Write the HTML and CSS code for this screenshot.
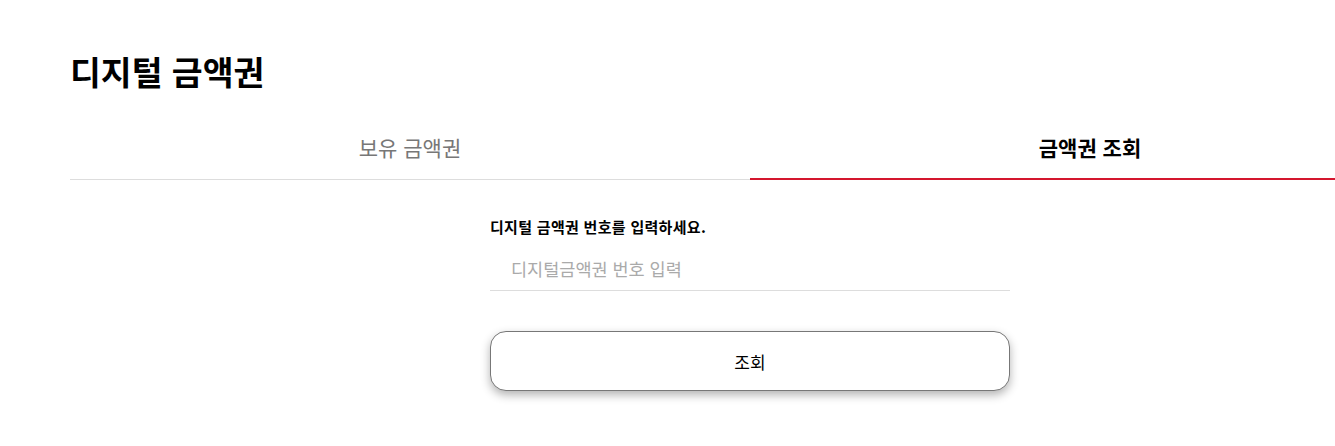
FILE: index.html
```html
<!DOCTYPE html>
<html lang="ko">
<head>
    <meta charset="UTF-8">
    <meta name="viewport" content="width=device-width, initial-scale=1.0">
    <title>디지털 금액권</title>
    <link rel="stylesheet" href="styles.css">
</head>
<body>
    <div class="page">
        <h1 class="title">디지털 금액권</h1>
        <div class="tabs">
            <div class="tab">보유 금액권</div>
            <div class="tab active">금액권 조회</div>
        </div>
        <form class="search">
            <label class="label" for="voucherNo">디지털 금액권 번호를 입력하세요.</label>
            <input type="text" id="voucherNo" placeholder="디지털금액권 번호 입력">
            <button type="button">조회</button>
        </form>
    </div>
</body>
</html>
```

FILE: styles.css
```css
body {
    font-family: "Noto Sans CJK KR", "Noto Sans", sans-serif;
    margin: 0;
    background: white;
    color: #111;
    overflow: hidden;
    min-height: 100vh;
}
.page {
    width: 1360px;
    padding: 0 0 0 70px;
}
.title {
    font-size: 33.5px;
    font-weight: bold;
    margin: 0;
    padding-top: 47px;
    line-height: 48px;
    color: #000;
}
.tabs {
    display: flex;
    margin-top: 32px;
}
.tab {
    flex: 1;
    text-align: center;
    font-size: 21px;
    color: #777;
    padding: 6px 0 18px;
    line-height: 28px;
    border-bottom: 1px solid #ddd;
}
.tab.active {
    color: #000;
    font-weight: bold;
    border-bottom: 2px solid #d4162e;
    padding-bottom: 17px;
}
.search {
    width: 520px;
    margin: 37px auto 0;
    display: flex;
    flex-direction: column;
}
.label {
    font-size: 15px;
    font-weight: bold;
    color: #000;
    line-height: 20px;
    letter-spacing: 0.3px;
}
input {
    border: none;
    border-bottom: 1px solid #ddd;
    font-family: inherit;
    font-size: 17.5px;
    padding: 9px 21px 9px;
    margin-top: 10px;
    outline: none;
}
input::placeholder {
    color: #aaa;
}
button {
    margin-top: 40px;
    height: 60px;
    border: 1px solid #777;
    border-radius: 16px;
    background: white;
    font-family: inherit;
    font-size: 17px;
    color: #000;
    box-shadow: 0 4px 10px rgba(0, 0, 0, 0.3);
    cursor: pointer;
}
```
